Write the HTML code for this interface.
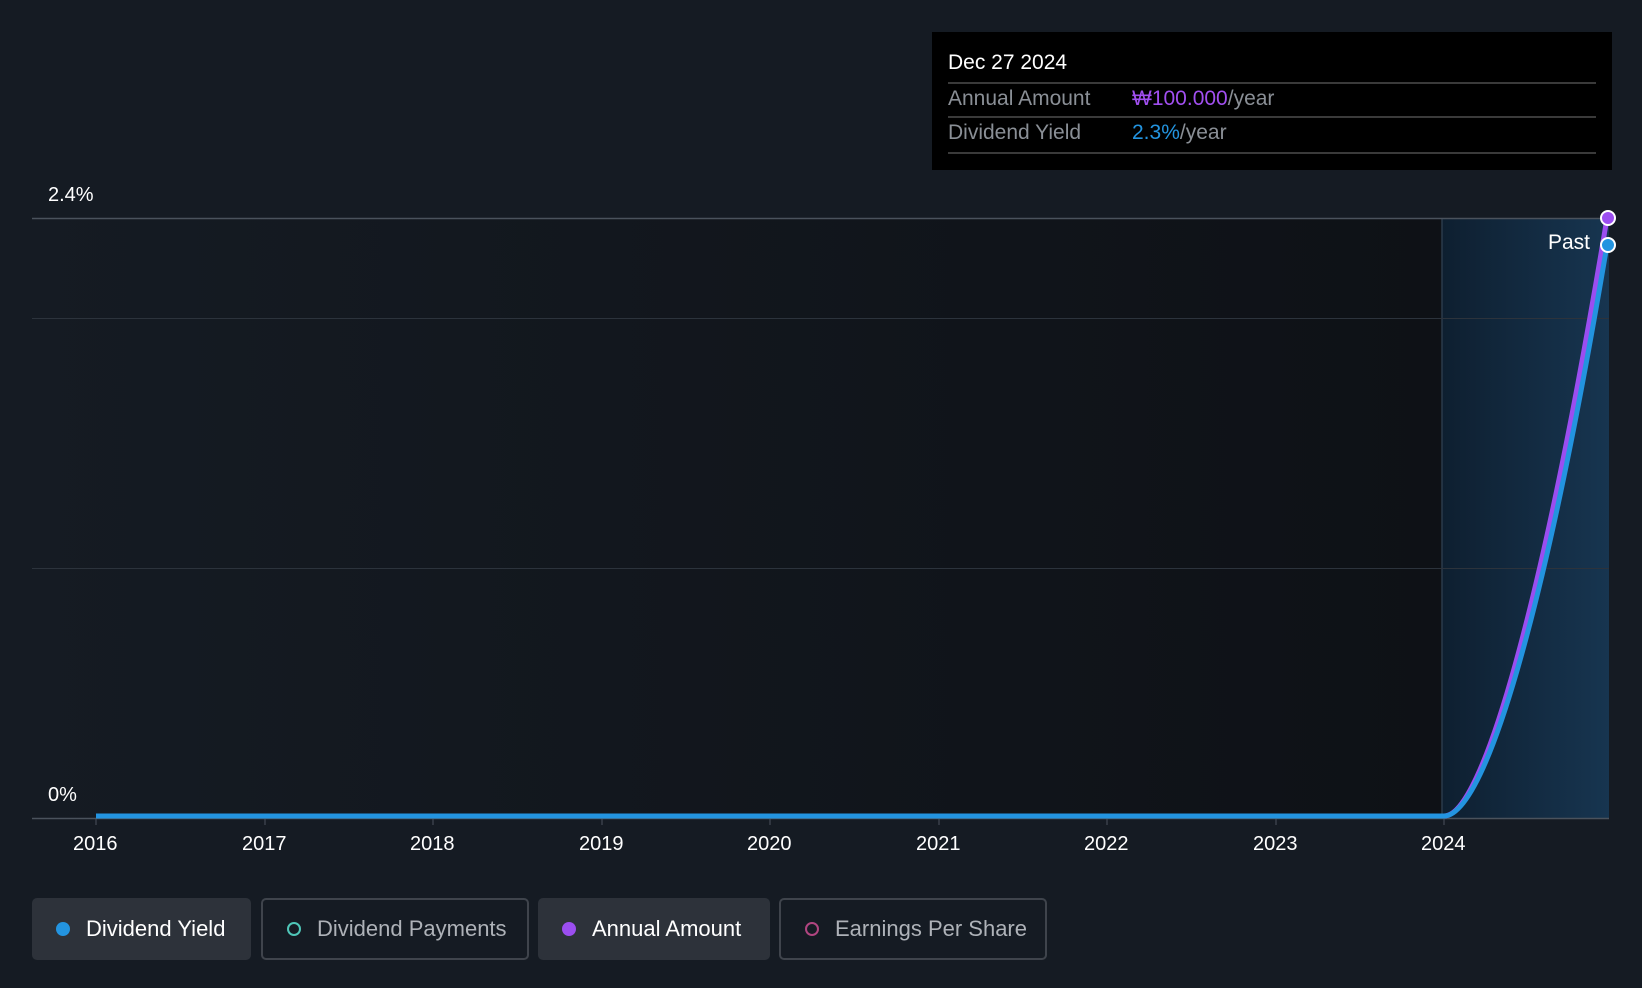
<!DOCTYPE html>
<html><head><style>
body{margin:0;width:1642px;height:988px;background:#151b23;font-family:"Liberation Sans",sans-serif;overflow:hidden;position:relative}
.t{position:absolute;color:#fff;font-size:20px}
.btn{position:absolute;top:898px;height:62px;border-radius:5px;box-sizing:border-box;font-size:22px;display:flex;align-items:center}
.dot{width:14px;height:14px;border-radius:50%;margin:0 16px 0 24px;box-sizing:border-box}
</style></head><body>
<svg width="1642" height="988" style="position:absolute;left:0;top:0">
<defs>
<linearGradient id="pg" x1="0" x2="1"><stop offset="0" stop-color="#0e1f30"/><stop offset="1" stop-color="#173550"/></linearGradient>
<linearGradient id="lg" x1="0" x2="1"><stop offset="0" stop-color="#151b23"/><stop offset="1" stop-color="#0e1116"/></linearGradient>
</defs>
<rect x="32" y="218" width="1410" height="600" fill="url(#lg)"/>
<rect x="1442" y="218" width="167" height="600" fill="url(#pg)"/>
<line x1="1442" y1="218" x2="1442" y2="818" stroke="#2a3a4a" stroke-width="1.5"/>
<line x1="32" y1="218.5" x2="1609" y2="218.5" stroke="#4a525c" stroke-width="1.5"/>
<line x1="32" y1="318.5" x2="1609" y2="318.5" stroke="#2c333c"/>
<line x1="32" y1="568.5" x2="1609" y2="568.5" stroke="#2c333c"/>
<line x1="32" y1="818.5" x2="1609" y2="818.5" stroke="#4a525c" stroke-width="1.5"/>
<g stroke="#4a525c"><line x1="96" y1="818" x2="96" y2="825"/><line x1="265" y1="818" x2="265" y2="825"/><line x1="433" y1="818" x2="433" y2="825"/><line x1="602" y1="818" x2="602" y2="825"/><line x1="770" y1="818" x2="770" y2="825"/><line x1="939" y1="818" x2="939" y2="825"/><line x1="1107" y1="818" x2="1107" y2="825"/><line x1="1276" y1="818" x2="1276" y2="825"/><line x1="1444" y1="818" x2="1444" y2="825"/></g>
<path d="M96 816 L1444 816 C1482 816 1542 610 1607 218" fill="none" stroke="#9b4ef0" stroke-width="5"/>
<path d="M96 816 L1444 816 C1484 816 1544 620 1607 245" fill="none" stroke="#2394e0" stroke-width="5"/>
<circle cx="1608" cy="218" r="7" fill="#9b4ef0" stroke="#fff" stroke-width="2"/>
<circle cx="1608" cy="245" r="7" fill="#2394e0" stroke="#fff" stroke-width="2"/>
</svg>
<div class="t" style="left:48px;top:184px">2.4%</div>
<div class="t" style="left:48px;top:784px">0%</div>
<div class="t" style="left:1548px;top:231px;font-size:21px">Past</div>
<div class="t" style="left:73px;top:833px">2016</div><div class="t" style="left:242px;top:833px">2017</div><div class="t" style="left:410px;top:833px">2018</div><div class="t" style="left:579px;top:833px">2019</div><div class="t" style="left:747px;top:833px">2020</div><div class="t" style="left:916px;top:833px">2021</div><div class="t" style="left:1084px;top:833px">2022</div><div class="t" style="left:1253px;top:833px">2023</div><div class="t" style="left:1421px;top:833px">2024</div>
<div style="position:absolute;left:932px;top:32px;width:680px;height:138px;background:#000">
<div class="t" style="left:16px;top:19px;font-size:21px">Dec 27 2024</div>
<div style="position:absolute;left:16px;right:16px;top:50px;border-top:2px solid #3a3a3a"></div>
<div class="t" style="left:16px;top:55px;font-size:21px;color:#8a8f96">Annual Amount</div>
<div class="t" style="left:200px;top:55px;font-size:21px;color:#8a8f96"><span style="color:#a14ff0">₩100.000</span>/year</div>
<div style="position:absolute;left:16px;right:16px;top:84px;border-top:2px solid #3a3a3a"></div>
<div class="t" style="left:16px;top:89px;font-size:21px;color:#8a8f96">Dividend Yield</div>
<div class="t" style="left:200px;top:89px;font-size:21px;color:#8a8f96"><span style="color:#2394e0">2.3%</span>/year</div>
<div style="position:absolute;left:16px;right:16px;top:120px;border-top:2px solid #3a3a3a"></div>
</div>
<div class="btn" style="left:32px;width:219px;background:#2d323a;color:#fff"><span class="dot" style="background:#2394e0"></span>Dividend Yield</div>
<div class="btn" style="left:261px;width:268px;border:2px solid #3f444c;color:#aeb2b8"><span class="dot" style="border:2px solid #4fc6b8"></span>Dividend Payments</div>
<div class="btn" style="left:538px;width:232px;background:#2d323a;color:#fff"><span class="dot" style="background:#9b4ef0"></span>Annual Amount</div>
<div class="btn" style="left:779px;width:268px;border:2px solid #3f444c;color:#aeb2b8"><span class="dot" style="border:2px solid #b04580"></span>Earnings Per Share</div>
</body></html>
